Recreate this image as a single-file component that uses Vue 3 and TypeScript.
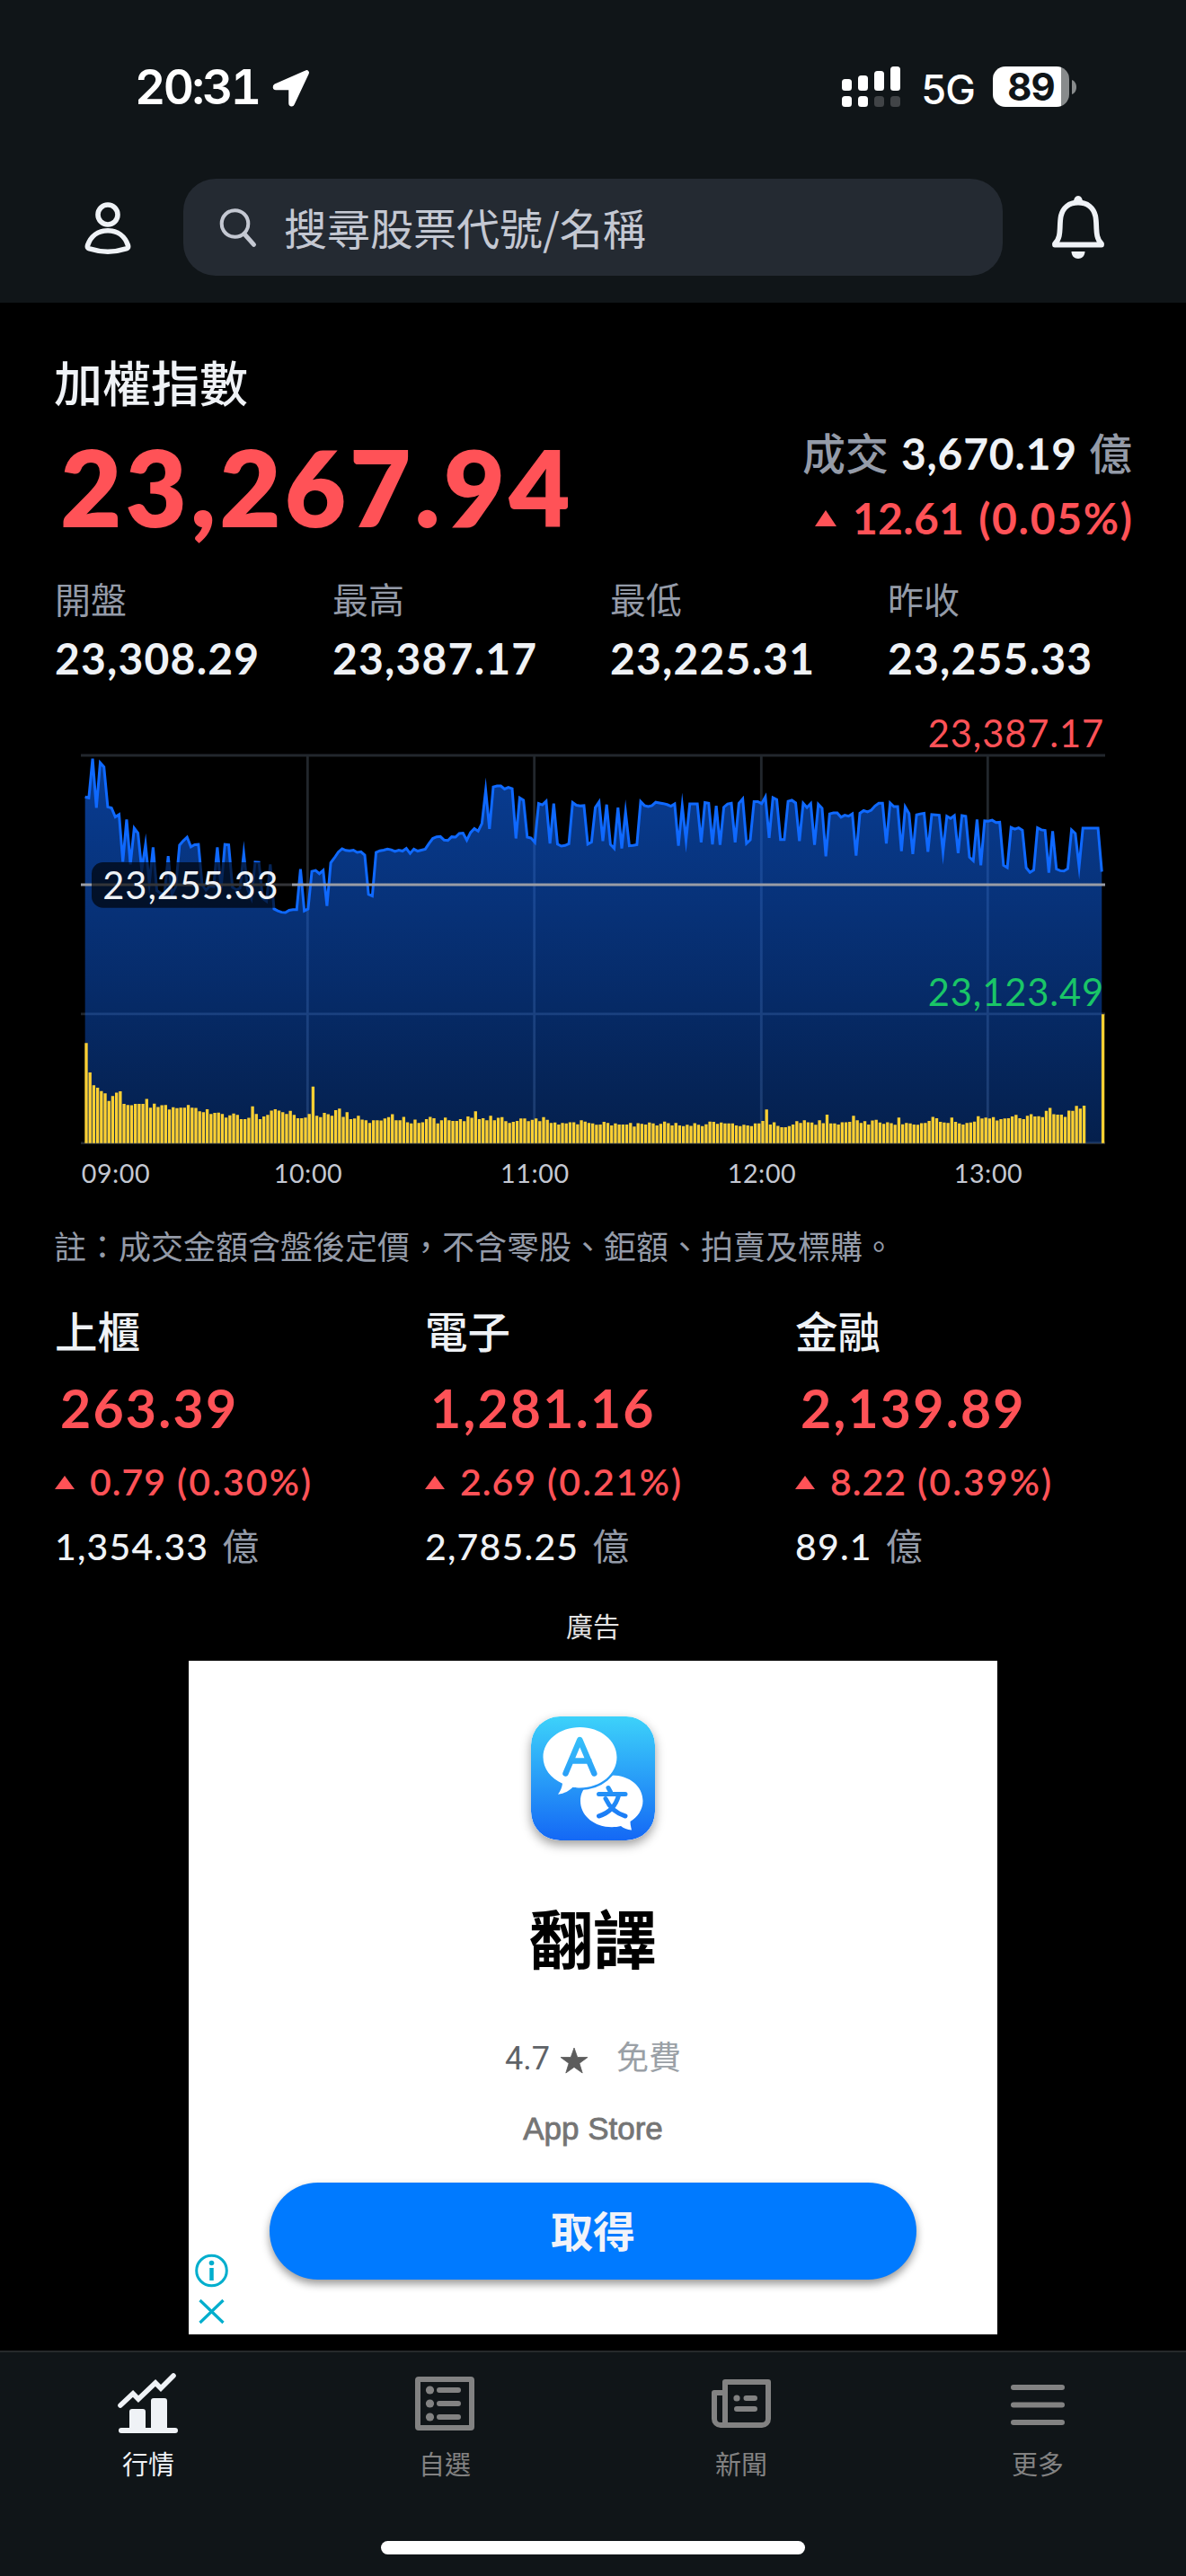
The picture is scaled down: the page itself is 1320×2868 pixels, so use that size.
<script setup lang="ts">
interface Stat { label: string; value: string }
interface SubIndex { name: string; value: string; change: string; percent: string; amount: string }

const stats: Stat[] = [
  { label: '開盤', value: '23,308.29' },
  { label: '最高', value: '23,387.17' },
  { label: '最低', value: '23,225.31' },
  { label: '昨收', value: '23,255.33' },
]

const indices: SubIndex[] = [
  { name: '上櫃', value: '263.39', change: '0.79', percent: '0.30%', amount: '1,354.33' },
  { name: '電子', value: '1,281.16', change: '2.69', percent: '0.21%', amount: '2,785.25' },
  { name: '金融', value: '2,139.89', change: '8.22', percent: '0.39%', amount: '89.1' },
]

// Chart space is three units per CSS pixel; one sample per trading minute.
const STEP = 12.62
const START = 284
const BASE = 1332
const SCALE_Y = 1.1097
const sy = (v: number): string => (v * SCALE_Y).toFixed(1)

const price: number[] = [
  290, 293, 175, 323, 187, 200, 320, 323, 350, 343, 485, 358, 493, 384, 399, 510, 433, 550, 442, 572,
  580, 583, 468, 583, 560, 435, 422, 411, 440, 434, 433, 555, 570, 558, 560, 442, 565, 433, 434, 562,
  569, 565, 460, 568, 595, 486, 487, 595, 604, 493, 627, 633, 637, 638, 631, 629, 629, 507, 633, 627,
  514, 511, 521, 511, 618, 488, 473, 456, 446, 451, 452, 450, 457, 455, 465, 583, 588, 457, 452, 450,
  447, 449, 454, 450, 453, 445, 460, 447, 453, 450, 447, 430, 415, 410, 409, 420, 421, 410, 411, 400,
  399, 420, 397, 385, 393, 370, 270, 386, 260, 257, 257, 266, 261, 265, 415, 293, 300, 411, 414, 427,
  310, 314, 303, 430, 310, 432, 438, 436, 431, 307, 315, 317, 316, 432, 426, 322, 305, 423, 313, 433,
  445, 322, 445, 335, 437, 436, 434, 304, 316, 319, 316, 306, 308, 310, 313, 318, 311, 437, 317, 420,
  311, 311, 311, 427, 307, 309, 433, 317, 434, 321, 311, 309, 427, 309, 296, 430, 419, 304, 304, 310,
  290, 413, 292, 298, 418, 418, 303, 300, 308, 423, 309, 322, 310, 434, 312, 324, 469, 341, 338, 338,
  351, 345, 348, 341, 467, 339, 331, 335, 330, 317, 309, 309, 430, 308, 319, 319, 453, 320, 340, 462,
  344, 341, 339, 455, 343, 344, 345, 455, 348, 355, 346, 459, 346, 348, 471, 482, 358, 496, 362, 363,
  360, 367, 366, 496, 503, 382, 387, 383, 390, 503, 517, 510, 383, 389, 391, 518, 393, 507, 512, 513,
  506, 389, 400, 500, 384, 384, 384, 384, 384, 515,
]

const volume: number[] = [
  1031, 1119, 1158, 1165, 1175, 1182, 1205, 1190, 1180, 1176, 1214, 1217, 1218, 1214, 1214, 1214, 1199, 1225, 1213, 1223,
  1218, 1217, 1231, 1224, 1227, 1225, 1225, 1217, 1225, 1226, 1236, 1239, 1230, 1244, 1241, 1240, 1244, 1255, 1248, 1243,
  1247, 1260, 1260, 1256, 1221, 1244, 1260, 1252, 1247, 1234, 1230, 1234, 1239, 1244, 1235, 1247, 1257, 1257, 1255, 1244,
  1162, 1250, 1254, 1241, 1245, 1250, 1233, 1228, 1253, 1239, 1260, 1258, 1250, 1261, 1263, 1271, 1263, 1263, 1264, 1258,
  1254, 1245, 1263, 1263, 1253, 1269, 1273, 1261, 1271, 1269, 1260, 1253, 1257, 1273, 1263, 1255, 1263, 1265, 1265, 1260,
  1266, 1252, 1256, 1236, 1260, 1257, 1263, 1250, 1263, 1256, 1254, 1266, 1271, 1268, 1265, 1258, 1258, 1266, 1262, 1258,
  1266, 1254, 1262, 1271, 1270, 1276, 1271, 1273, 1269, 1269, 1275, 1263, 1267, 1271, 1273, 1277, 1276, 1268, 1271, 1279,
  1273, 1276, 1276, 1276, 1271, 1282, 1272, 1274, 1276, 1270, 1273, 1279, 1274, 1267, 1272, 1279, 1271, 1279, 1281, 1277,
  1280, 1272, 1277, 1281, 1275, 1267, 1268, 1274, 1270, 1273, 1273, 1273, 1279, 1281, 1277, 1279, 1281, 1273, 1273, 1265,
  1231, 1276, 1269, 1280, 1284, 1284, 1281, 1276, 1266, 1271, 1263, 1269, 1270, 1277, 1263, 1272, 1246, 1273, 1273, 1276,
  1269, 1269, 1268, 1250, 1263, 1271, 1266, 1276, 1264, 1262, 1270, 1274, 1269, 1272, 1277, 1255, 1275, 1271, 1273, 1276,
  1277, 1272, 1271, 1265, 1253, 1257, 1268, 1270, 1271, 1255, 1268, 1273, 1276, 1271, 1270, 1267, 1251, 1258, 1255, 1258,
  1254, 1264, 1260, 1258, 1257, 1252, 1247, 1257, 1260, 1250, 1245, 1252, 1251, 1254, 1235, 1226, 1245, 1246, 1246, 1253,
  1234, 1235, 1220, 1228, 1219, BASE, BASE, BASE, BASE, 944,
]

const linePoints = price.map((y, i) => `${(START + i * STEP).toFixed(1)},${sy(y)}`).join(' ')
const areaPoints = `${START},${sy(BASE)} ${linePoints} ${(START + (price.length - 1) * STEP).toFixed(1)},${sy(BASE)}`
const volumePath = volume
  .map((y, i) => `M${(START - 1 + i * STEP).toFixed(1)} ${sy(BASE)}V${sy(y)}h10V${sy(BASE)}z`)
  .join('')

const hours = [
  { x: 1027, label: '10:00' },
  { x: 1784, label: '11:00' },
  { x: 2542, label: '12:00' },
  { x: 3298, label: '13:00' },
]
</script>

<template>
  <div class="screen">
    <header class="top">
      <div class="status">
        <span class="clock">20:31</span>
        <svg class="arrow" width="44" height="44" viewBox="0 0 44 44">
          <path d="M38.2 3.2 4 18.2C1.6 19.6 2 23.4 5 23.4H20V39c0 3 3.8 3.8 5 1L41 6c1-2-.8-3.8-2.800-2.800z" fill="#fff" stroke="#fff" stroke-width="1.500" stroke-linejoin="round" />
        </svg>
        <span class="grow"></span>
        <svg class="signal" width="66" height="46" viewBox="0 0 66 46">
          <g fill="#fff">
            <rect x="0" y="14" width="11" height="13" rx="3.500" />
            <rect x="18" y="10" width="11" height="17" rx="3.500" />
            <rect x="36" y="5" width="11" height="22" rx="3.500" />
            <rect x="54" y="0" width="11" height="27" rx="3.500" />
            <rect x="0" y="33" width="11" height="12" rx="3.500" />
            <rect x="18" y="33" width="11" height="12" rx="3.500" />
          </g>
          <g fill="#414447">
            <rect x="36" y="33" width="11" height="12" rx="3.500" />
            <rect x="54" y="33" width="11" height="12" rx="3.500" />
          </g>
        </svg>
        <span class="net">5G</span>
        <div class="battery"><span>89</span></div>
        <svg class="nub" width="5" height="16" viewBox="0 0 5 16"><path d="M0 0c3 1 5 4 5 8s-2 7-5 8z" fill="#888b8c" /></svg>
      </div>
      <div class="tools">
        <svg class="person" width="56" height="60" viewBox="0 0 56 60" fill="none" stroke="#eff2f6" stroke-width="5.600">
          <circle cx="28" cy="16" r="11" />
          <path d="M28 33.800C17 33.800 9 40 5.600 50c-.6 2 0 3.200 2 3.900 13 4.200 27.800 4.200 40.800 0 2-.7 2.600-1.900 2-3.900C47 40 39 33.800 28 33.800z" stroke-linejoin="round" />
        </svg>
        <div class="search">
          <svg width="44" height="48" viewBox="0 0 44 48" fill="none" stroke="#c4c8d2" stroke-width="4" stroke-linecap="round">
            <circle cx="18.500" cy="20" r="14.800" />
            <path d="m29 31.500 10.500 11.800" stroke-width="5" />
          </svg>
          <span>搜尋股票代號/名稱</span>
        </div>
        <svg class="bell" width="64" height="74" viewBox="0 0 64 74">
          <path d="M6 55.300C14 48 10.500 36 12.800 24.500 15 15 22 9.500 32 9.500s17 5.500 19.200 15C53.500 36 50 48 58 55.300v1.200H6z" fill="none" stroke="#eff2f6" stroke-width="5.800" stroke-linejoin="round" />
          <path d="M27 9c0-4 2-7 5-7s5 3 5 7zM24.500 64h15c0 5-3.500 8-7.500 8s-7.500-3-7.500-8z" fill="#eff2f6" />
        </svg>
      </div>
    </header>

    <main class="content">
      <section class="hero">
        <div class="hero-left">
          <h1>加權指數</h1>
          <div class="index-value">23,267.94</div>
        </div>
        <div class="hero-right">
          <div class="turnover"><span class="unit">成交</span><span class="num">3,670.19</span><span class="unit">億</span></div>
          <div class="delta">
            <svg width="24" height="18" viewBox="0 0 24 18"><path d="M12 0 24 18H0z" fill="#ff5257" /></svg>
            <span class="amount">12.61</span><span class="pct">(0.05%)</span>
          </div>
        </div>
      </section>

      <section class="stats">
        <div v-for="s in stats" :key="s.label" class="stat">
          <div class="stat-label">{{ s.label }}</div>
          <div class="stat-value">{{ s.value }}</div>
        </div>
      </section>

      <svg class="chart" width="1320" height="560" viewBox="0 0 3960 1680">
        <defs>
          <linearGradient id="area-fill" gradientUnits="userSpaceOnUse" x1="0" y1="194" x2="0" y2="1478">
            <stop offset="0" stop-color="#0f69ff" stop-opacity=".58" />
            <stop offset="1" stop-color="#0f69ff" stop-opacity=".3" />
          </linearGradient>
        </defs>
        <g stroke="#22272d" stroke-width="8.500">
          <path d="M270 183H3690M270 1046.500H3690M270 1478H3690" />
          <path v-for="h in hours" :key="h.label" :d="`M${h.x} 183V1478`" />
        </g>
        <polygon :points="areaPoints" fill="url(#area-fill)" />
        <path :d="volumePath" fill="#fdd033" />
        <polyline :points="linePoints" fill="none" stroke="#0f69ff" stroke-width="9" stroke-miterlimit="9.900" />
        <path d="M270 614.700H3690" stroke="#9a9da6" stroke-width="9" />
        <rect x="306" y="540" width="669" height="152" rx="38" fill="#000" fill-opacity=".66" />
        <g class="chart-num">
          <text x="343" y="663" fill="#eff2f6">23,255.33</text>
          <text x="3687" y="157" text-anchor="end" fill="#ff5257">23,387.17</text>
          <text x="3687" y="1020" text-anchor="end" fill="#1ac567">23,123.49</text>
        </g>
        <g class="chart-time" fill="#c4c8d2">
          <text x="272" y="1610">09:00</text>
          <text v-for="h in hours" :key="h.label" :x="h.x + 2" y="1610" text-anchor="middle">{{ h.label }}</text>
        </g>
      </svg>

      <p class="note">註：成交金額含盤後定價，不含零股、鉅額、拍賣及標購。</p>

      <section class="indices">
        <article v-for="x in indices" :key="x.name" class="sub">
          <h2>{{ x.name }}</h2>
          <div class="sub-value">{{ x.value }}</div>
          <div class="sub-delta">
            <svg width="22" height="15" viewBox="0 0 22 15"><path d="M11 0 22 15H0z" fill="#ff5257" /></svg>
            <span class="amount">{{ x.change }}</span><span class="pct">({{ x.percent }})</span>
          </div>
          <div class="sub-amount"><span class="num">{{ x.amount }}</span><span class="unit">億</span></div>
        </article>
      </section>

      <div class="ad-label">廣告</div>
      <aside class="ad">
        <svg class="app-icon" width="138" height="138" viewBox="0 0 138 138">
          <defs>
            <linearGradient id="icon-sky" gradientUnits="userSpaceOnUse" x1="0" y1="0" x2="0" y2="138">
              <stop offset="0" stop-color="#3dd2fa" />
              <stop offset="1" stop-color="#1468f5" />
            </linearGradient>
          </defs>
          <rect width="138" height="138" rx="32" fill="url(#icon-sky)" />
          <path d="M90 65.500c20 0 34.500 12.500 34.500 28.500 0 10-6 18-14 23 0 4 1 7 1.500 9.500-5-.5-9-2-12-4.500-3 .8-6.500 1.200-10 1.200-20 0-35-13-35-29s15-28.700 35-28.700z" fill="#fff" />
          <path d="M54.500 12C77 12 95.500 26.500 95.500 45.500S77 79.500 54.500 79.500c-3 0-5-.2-8-.8-4 4-9 7-16.500 8 3-4 4.500-8 5-12C22 69 13.500 58 13.500 45.500 13.500 26.500 32 12 54.500 12z" fill="#fff" stroke="url(#icon-sky)" stroke-width="5" paint-order="stroke" />
          <path d="M38.500 63.500 54.300 26l16 37.500M44.500 49.500h20" fill="none" stroke="url(#icon-sky)" stroke-width="6.500" stroke-linecap="round" stroke-linejoin="round" />
          <path d="M86 79.500 88.500 84M75.500 86.500H105M97.500 88c-3 11-9 19-22 23M83 91.500c4 9 11 16 22 19.500" fill="none" stroke="url(#icon-sky)" stroke-width="5" stroke-linecap="round" />
        </svg>
        <div class="app-name">翻譯</div>
        <div class="rating">
          <span>4.7</span>
          <svg width="30" height="28" viewBox="0 0 30 28"><path d="m15 0 3.700 10.500H30l-9.100 6.700 3.300 10.800-9.200-6.600L5.800 28l3.300-10.800L0 10.500h11.300z" fill="#5c5c5c" stroke="#5c5c5c" stroke-width=".8" /></svg>
          <span class="free">免費</span>
        </div>
        <div class="store">App Store</div>
        <div class="get">取得</div>
        <svg class="ad-marks" width="40" height="84" viewBox="0 0 40 84" fill="none" stroke="#00aecd">
          <circle cx="19.500" cy="20" r="16.800" stroke-width="3" />
          <path d="M19.500 17v14" stroke-width="4.500" />
          <circle cx="19.500" cy="11.500" r="2.800" fill="#00aecd" stroke="none" />
          <path d="m6.500 53 26 25M32.500 53l-26 25" stroke-width="3.200" />
        </svg>
      </aside>
    </main>

    <nav class="tabs">
      <div class="tab-row">
        <div class="tab active">
          <svg width="72" height="72" viewBox="0 0 72 72">
            <path d="M3 68a3 3 0 0 1 3-3h60a3 3 0 0 1 0 6H6a3 3 0 0 1-3-3zM15 66V47a3 3 0 0 1 3-3h12a3 3 0 0 1 3 3v19zM39 66V35a3 3 0 0 1 3-3h12a3 3 0 0 1 3 3v31z" fill="currentColor" />
            <path d="m5 40 14-13 6 6 19-18 6 6L64 7" fill="none" stroke="currentColor" stroke-width="5.600" stroke-linecap="round" stroke-linejoin="miter" />
          </svg>
          <span>行情</span>
        </div>
        <div class="tab">
          <svg width="72" height="72" viewBox="0 0 72 72" fill="none" stroke="currentColor" stroke-width="6" stroke-linecap="round">
            <rect x="6" y="11" width="60" height="54" rx="1" />
            <path d="M30 23h21M30 38h21M30 53h21" />
            <g fill="currentColor" stroke="none"><circle cx="19.500" cy="23" r="4.600" /><circle cx="19.500" cy="38" r="4.600" /><circle cx="19.500" cy="53" r="4.600" /></g>
          </svg>
          <span>自選</span>
        </div>
        <div class="tab">
          <svg width="72" height="72" viewBox="0 0 72 72" fill="none" stroke="currentColor" stroke-width="6" stroke-linecap="round" stroke-linejoin="round">
            <path d="M18 62V14h48v41a7 7 0 0 1-7 7H13a7 7 0 0 1-7-7V26h9" />
            <path d="M41.500 32H51M31 44h20" />
            <circle cx="31" cy="32" r="3.600" fill="currentColor" stroke="none" />
          </svg>
          <span>新聞</span>
        </div>
        <div class="tab">
          <svg width="72" height="72" viewBox="0 0 72 72" fill="none" stroke="currentColor" stroke-width="6" stroke-linecap="round">
            <path d="M9 20h54M9 39.500h54M9 59h54" />
          </svg>
          <span>更多</span>
        </div>
      </div>
      <div class="home"></div>
    </nav>
  </div>
</template>

<style>
body { background: #000; }
</style>

<style scoped>
.screen {
  width: 1320px;
  height: 2868px;
  overflow: hidden;
  background: #000;
  color: #eff2f6;
  font-family: Lato, "Noto Sans CJK TC", sans-serif;
  font-feature-settings: "tnum", "lnum";
}
.top { height: 337px; background: #101518; }
.status {
  display: flex;
  align-items: center;
  height: 119px;
  padding: 74px 122px 0 150px;
  box-sizing: border-box;
  font-family: Inter, sans-serif;
  color: #fff;
  line-height: 45px;
}
.clock { font-size: 53px; font-weight: 600; letter-spacing: -2.6px; line-height: 46px; width: 152px; }
.arrow { margin-top: 2px; }
.grow { flex: 1; }
.signal { width: 66px; }
.net { font-size: 45px; font-weight: 450; letter-spacing: -2px; margin: 6px 0 0 22px; width: 58px; }
.battery {
  width: 85px;
  height: 45px;
  margin-left: 22px;
  border-radius: 14px;
  background: linear-gradient(90deg, #fff 76px, #888b8c 76px);
  color: #101518;
  font-size: 42px;
  font-weight: 700;
  letter-spacing: -1px;
  text-align: center;
}
.nub { margin-left: 3px; }
.tools {
  display: flex;
  align-items: center;
  height: 108px;
  margin-top: 80px;
  padding-left: 92px;
}
.search {
  display: flex;
  align-items: center;
  width: 912px;
  height: 108px;
  margin-left: 56px;
  padding-left: 39px;
  box-sizing: border-box;
  border-radius: 36px;
  background: #242a32;
  color: #c4c8d2;
  font: 48px/60px "Noto Sans CJK TC", sans-serif;
}
.search span { margin: -3px 0 0 29px; }
.bell { margin-left: 52px; }

.content { padding-top: 64px; }
.hero { display: flex; justify-content: space-between; height: 213px; padding: 0 60px; }
h1 { margin: 0 0 28px; font-size: 54px; line-height: 54px; font-weight: 500; }
.index-value {
  padding-left: 7px;
  font-size: 118px;
  line-height: 118px;
  font-weight: 800;
  letter-spacing: 4px;
  color: #ff5257;
}
.hero-right {
  padding-top: 68px;
  font-size: 48px;
  line-height: 72px;
  font-weight: 500;
  text-align: right;
}
.turnover, .delta { display: flex; justify-content: flex-end; align-items: center; }
.unit { color: #949ba8; }
.num { margin: 0 13px 0 14px; font-weight: 700; letter-spacing: .8px; }
.delta { color: #ff5257; font-weight: 700; }
.delta .amount { margin: 0 16px 0 18px; letter-spacing: .3px; }
.delta .pct { letter-spacing: 1.7px; margin-right: -1.7px; }
.stats { display: grid; grid-template-columns: repeat(4, 309px); padding: 30px 0 0 61px; }
.stat-label { color: #949ba8; font-size: 40px; line-height: 48px; margin-bottom: 11px; }
.stat-value { font-size: 48px; line-height: 60px; font-weight: 700; letter-spacing: 1.2px; }
.chart { display: block; margin-top: 17px; }
.chart-num { font-size: 125px; letter-spacing: 2.6px; }
.chart-time { font-size: 86px; letter-spacing: 1.8px; }
.note { margin: 24px 0 0 60px; font-size: 36px; line-height: 48px; color: #949ba8; }
.indices { display: grid; grid-template-columns: repeat(3, 412px); margin: 42px 0 0 61px; }
h2 { margin: 0; font-size: 47.5px; line-height: 58px; font-weight: 500; }
.sub-value {
  margin-top: 23px;
  padding-left: 6px;
  font-size: 59px;
  line-height: 66px;
  font-weight: 700;
  letter-spacing: 2.2px;
  color: #ff5257;
}
.sub-delta {
  display: flex;
  align-items: center;
  margin-top: 22px;
  font-size: 41px;
  line-height: 54px;
  font-weight: 600;
  color: #ff5257;
}
.sub-delta .amount { margin: 0 12px 0 17px; letter-spacing: 1px; }
.sub-delta .pct { letter-spacing: 2.1px; }
.sub-amount { margin-top: 18px; font-size: 41px; line-height: 54px; }
.sub-amount .num { margin: 0 15px 0 0; font-weight: 500; letter-spacing: 1.2px; }
.ad-label { margin-top: 41px; text-align: center; font-size: 30px; line-height: 40px; color: #e3e3e3; }
.ad {
  position: relative;
  display: flex;
  flex-direction: column;
  align-items: center;
  width: 900px;
  height: 750px;
  margin: 19px auto 0;
  background: #fff;
}
.app-icon { display: block; margin-top: 62px; border-radius: 32px; box-shadow: 0 5px 12px rgba(0, 0, 0, .38); }
.app-name { margin-top: 65px; color: #000; font-size: 71px; line-height: 90px; font-weight: 700; }
.rating {
  display: flex;
  align-items: center;
  margin-top: 68px;
  height: 40px;
  font: 36px/40px Roboto, "Noto Sans CJK TC", sans-serif;
  color: #5f6368;
}
.rating svg { margin: 3px 32px 0 12px; overflow: visible; }
.free { color: #9aa0a6; }
.store {
  margin-top: 38px;
  font: 35px/40px "Liberation Sans", sans-serif;
  color: #757575;
  -webkit-text-stroke: .8px #757575;
}
.get {
  width: 720px;
  height: 108px;
  margin-top: 40px;
  border-radius: 54px;
  background: #007aff;
  box-shadow: 0 5px 10px rgba(0, 0, 0, .4);
  color: #f1f3f9;
  font-size: 47px;
  line-height: 108px;
  font-weight: 700;
  text-align: center;
}
.ad-marks { position: absolute; left: 6px; top: 659px; }
.tabs {
  height: 251px;
  margin-top: 18px;
  box-sizing: border-box;
  border-top: 2px solid #26292b;
  background: #101518;
}
.tab-row { display: grid; grid-template-columns: repeat(4, 330px); }
.tab {
  display: flex;
  flex-direction: column;
  align-items: center;
  padding-top: 19px;
  font-size: 29px;
  line-height: 36px;
  color: #828282;
}
.tab span { margin-top: 16px; }
.tab.active { color: #eff2f6; }
.home { width: 472px; height: 15px; margin: 67px auto 0; border-radius: 8px; background: #fff; }
</style>
